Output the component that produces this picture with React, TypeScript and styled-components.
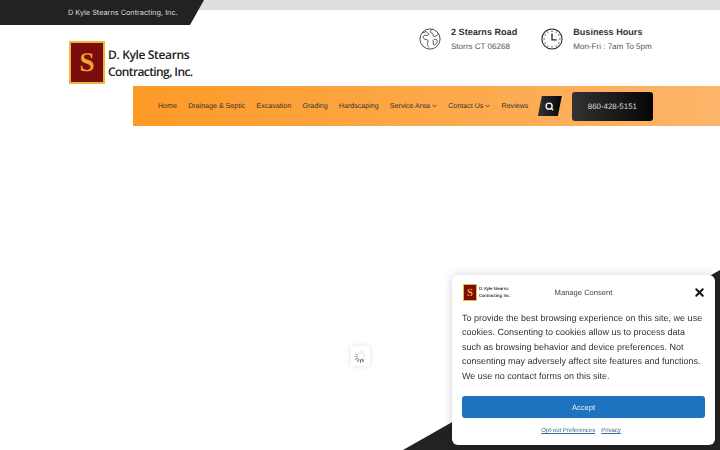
import React from 'react'
import styled, { createGlobalStyle } from 'styled-components'
import { Search, X } from 'lucide-react'

const GlobalStyle = createGlobalStyle`
  html, body {
    margin: 0;
    padding: 0;
    height: 100%;
    overflow: hidden;
    background: #fff;
    font-family: 'Liberation Sans', Arial, sans-serif;
    text-rendering: geometricPrecision;
  }
  * { box-sizing: border-box; }
`

const navItems = [
  { label: 'Home' },
  { label: 'Drainage & Septic' },
  { label: 'Excavation' },
  { label: 'Grading' },
  { label: 'Hardscaping' },
  { label: 'Service Area', sub: true },
  { label: 'Contact Us', sub: true },
  { label: 'Reviews' },
]

const Logo: React.FC<{ small?: boolean }> = ({ small }) => (
  <LogoRow $small={small}>
    <LogoMark $small={small}>S</LogoMark>
    <LogoText $small={small}>
      <LogoName $small={small}>D. Kyle Stearns</LogoName>
      <LogoSub $small={small}>Contracting, Inc.</LogoSub>
    </LogoText>
  </LogoRow>
)

const GlobeIcon = () => (
  <svg width='22' height='22' viewBox='0 0 24 24' fill='none' stroke='#3c3c3c' strokeWidth='1' strokeLinejoin='round'>
    <circle cx='12' cy='12' r='11' />
    <path d='M3.500 5c1.500 0 3-.3 4.300-1.200.6 1.300 2.200 1.500 2.700 2.700.4 1-.6 1.800-1.700 1.600-1.300-.2-2.500-.5-3.500.3-1.200 1-.8 2.700.4 3.500 1.300.8 3 .4 3.900 1.500.8 1.100-.2 2.300-.4 3.500-.2 1.500.6 3.200 1.700 4.200' />
    <path d='M14.500 1.300c-1 1-2.300 1.500-2.200 2.800.1 1.300 2 1.100 2.800 2.100.7 1-.1 2.400 1 3 1.100.5 2.300-.4 3.400-1.200.9-.7 1.700-1.400 2.300-2' />
    <path d='M16.200 12.800c1.300-.6 3-.6 3.500.6.500 1.400-.5 3.100-1.500 4.400-.8 1-2 1.200-2.500 0-.5-1.300.3-2-.2-3-.3-.8 0-1.600.7-2z' />
  </svg>
)

const ClockIcon = () => (
  <svg width='22' height='22' viewBox='0 0 24 24' fill='none' stroke='#222' strokeLinecap='round'>
    <circle cx='12' cy='12' r='11' strokeWidth='1.100' />
    <path d='M12 6.500V13h4.500' strokeWidth='1.400' />
    <path d='M12 3.200v.5M12 20.300v.5M3.200 12h.5M20.300 12h.5M7.500 4.500v.2M16.500 4.500v.2M7.500 19.300v.2M16.500 19.300v.2M4.500 7.500h.2M4.500 16.500h.2M19.300 7.500h.2M19.300 16.500h.2' strokeWidth='1.100' />
  </svg>
)

const Spinner = () => (
  <svg width='13' height='13' viewBox='0 0 24 24' fill='none' strokeWidth='2.200' strokeLinecap='round'>
    {Array.from({ length: 12 }).map((_, i) => (
      <line
        key={i}
        x1='12'
        y1='1.500'
        x2='12'
        y2='6'
        stroke='#555'
        opacity={i >= 5 && i <= 10 ? 0.95 - (i - 5) * 0.12 : 0.12}
        transform={`rotate(${i * 30} 12 12)`}
      />
    ))}
  </svg>
)

const Chevron = () => (
  <svg width='5' height='4' viewBox='0 0 10 8' fill='none' stroke='#333' strokeWidth='1.500'>
    <path d='M1 1.500l4 4.500 4-4.500' />
  </svg>
)

export default function App() {
  return (
    <>
      <GlobalStyle />
      <Page>
        <TopBar>
          <TopBarDark>D Kyle Stearns Contracting, Inc.</TopBarDark>
          <TopBarGrey />
        </TopBar>
        <Header>
          <LogoSlot>
            <Logo />
          </LogoSlot>
          <InfoGroup>
            <InfoItem>
              <GlobeIcon />
              <InfoText>
                <InfoTitle>2 Stearns Road</InfoTitle>
                <InfoLine>Storrs CT 06268</InfoLine>
              </InfoText>
            </InfoItem>
            <InfoItem>
              <ClockIcon />
              <InfoText>
                <InfoTitle>Business Hours</InfoTitle>
                <InfoLine>Mon-Fri : 7am To 5pm</InfoLine>
              </InfoText>
            </InfoItem>
          </InfoGroup>
        </Header>
        <NavBar>
          <NavList>
            {navItems.map(item => (
              <NavItem key={item.label}>
                {item.label}
                {item.sub && <Chevron />}
              </NavItem>
            ))}
          </NavList>
          <SearchButton>
            <Search size={9} strokeWidth={3.500} color='#fff' />
          </SearchButton>
          <PhoneButton>860-428-5151</PhoneButton>
        </NavBar>
      </Page>
      <LoaderBox>
        <Spinner />
      </LoaderBox>
      <CornerShape />
      <ConsentCard>
        <ConsentHeader>
          <Logo small />
          <ConsentTitle>Manage Consent</ConsentTitle>
          <CloseButton>
            <X size={13} strokeWidth={3.500} color='#111' />
          </CloseButton>
        </ConsentHeader>
        <ConsentBody>
          To provide the best browsing experience on this site, we use cookies. Consenting to cookies allow us to process
          data such as browsing behavior and device preferences. Not consenting may adversely affect site features and
          functions. We use no contact forms on this site.
        </ConsentBody>
        <AcceptButton>Accept</AcceptButton>
        <ConsentLinks>
          <ConsentLink>Opt-out Preferences</ConsentLink>
          <ConsentLink>Privacy</ConsentLink>
        </ConsentLinks>
      </ConsentCard>
    </>
  )
}

const Page = styled.div`
  width: 720px;
`

const TopBar = styled.div`
  display: flex;
  height: 25px;
`

const TopBarDark = styled.div`
  width: 204px;
  height: 25px;
  padding-left: 68px;
  display: flex;
  align-items: center;
  background: #222;
  color: #ddd;
  font-family: Inter, 'Liberation Sans', sans-serif;
  font-size: 7.300px;
  white-space: nowrap;
  clip-path: polygon(0 0, 100% 0, 190px 100%, 0 100%);
`

const TopBarGrey = styled.div`
  flex: 1;
  height: 10px;
  margin-left: -14px;
  background: #dedede;
`

const Header = styled.div`
  display: flex;
  height: 61px;
  align-items: flex-start;
`

const LogoSlot = styled.div`
  width: 419px;
  padding: 16px 0 0 69px;
`

const LogoRow = styled.div<{ $small?: boolean }>`
  display: flex;
  align-items: center;
  gap: ${p => (p.$small ? '2px' : '3px')};
  margin-left: ${p => (p.$small ? '1px' : '0')};
`

const LogoMark = styled.div<{ $small?: boolean }>`
  width: ${p => (p.$small ? '14px' : '36px')};
  height: ${p => (p.$small ? '17px' : '43px')};
  display: flex;
  align-items: center;
  justify-content: center;
  background: #7a0c0c;
  border: ${p => (p.$small ? '1px' : '2.500px')} solid #e8b83a;
  color: #eda52e;
  font-family: 'Liberation Serif', serif;
  font-weight: 700;
  font-size: ${p => (p.$small ? '11px' : '27px')};
`

const LogoText = styled.div<{ $small?: boolean }>`
  display: flex;
  flex-direction: column;
  font-family: 'Open Sans', 'Liberation Sans', sans-serif;
  font-weight: 600;
  color: #222;
  line-height: ${p => (p.$small ? '7px' : '17.500px')};
  white-space: nowrap;
  padding-top: ${p => (p.$small ? '0' : '1px')};
`

const LogoName = styled.span<{ $small?: boolean }>`
  font-size: ${p => (p.$small ? '4.300px' : '12px')};
  letter-spacing: ${p => (p.$small ? '-0.1px' : '-0.35px')};
`

const LogoSub = styled.span<{ $small?: boolean }>`
  font-size: ${p => (p.$small ? '4.300px' : '12px')};
  letter-spacing: ${p => (p.$small ? '-0.15px' : '-0.6px')};
`

const InfoGroup = styled.div`
  display: flex;
  gap: 24px;
  padding-top: 3px;
`

const InfoItem = styled.div`
  display: flex;
  gap: 10px;
  align-items: center;
  height: 22px;
`

const InfoText = styled.div`
  display: flex;
  flex-direction: column;
  gap: 3px;
  white-space: nowrap;
`

const InfoTitle = styled.div`
  font-size: 9.100px;
  font-weight: 700;
  color: #333;
  line-height: 12px;
`

const InfoLine = styled.div`
  font-size: 8.050px;
  color: #555;
  line-height: 12px;
`

const NavBar = styled.div`
  display: flex;
  align-items: center;
  margin-left: 133px;
  height: 40px;
  padding-left: 25px;
  background: linear-gradient(90deg, #fd9a26 0%, #fdb56a 100%);
`

const NavList = styled.div`
  display: flex;
  gap: 11.200px;
  align-items: center;
`

const NavItem = styled.div`
  display: flex;
  align-items: center;
  gap: 2px;
  font-size: 7.100px;
  color: #333;
  white-space: nowrap;
`

const SearchButton = styled.div`
  margin-left: 9.500px;
  width: 24px;
  height: 20px;
  display: flex;
  align-items: center;
  justify-content: center;
  background: linear-gradient(90deg, #333, #050505);
  clip-path: polygon(4px 0, 100% 0, 20px 100%, 0 100%);
`

const PhoneButton = styled.div`
  margin-left: 10px;
  width: 81px;
  height: 29px;
  display: flex;
  align-items: center;
  justify-content: center;
  border-radius: 3px;
  background: linear-gradient(90deg, #333, #050505);
  color: #ddd;
  font-size: 7.900px;
`

const LoaderBox = styled.div`
  position: fixed;
  left: 351px;
  top: 346px;
  width: 19px;
  height: 20px;
  display: flex;
  align-items: center;
  justify-content: center;
  background: #fff;
  box-shadow: 0 0 6px rgba(0, 0, 0, 0.12);
`

const CornerShape = styled.div`
  position: fixed;
  inset: 0;
  background: #222;
  clip-path: polygon(403px 450px, 720px 270px, 720px 450px);
`

const ConsentCard = styled.div`
  position: fixed;
  left: 452px;
  top: 275px;
  width: 263px;
  height: 170px;
  padding: 9px 10px 10px;
  border-radius: 6px;
  background: #fff;
  box-shadow: 0 0 10px rgba(0, 0, 0, 0.18);
`

const ConsentHeader = styled.div`
  display: grid;
  grid-template-columns: 1fr auto 1fr;
  align-items: center;
  height: 14px;
  margin-bottom: 13px;
`

const ConsentTitle = styled.div`
  font-size: 7.600px;
  color: #444;
  white-space: nowrap;
`

const CloseButton = styled.div`
  display: flex;
  justify-content: flex-end;
  margin-right: -1px;
`

const ConsentBody = styled.div`
  font-size: 9px;
  line-height: 14.400px;
  color: #333;
`

const AcceptButton = styled.div`
  margin-top: 13px;
  height: 22px;
  display: flex;
  align-items: center;
  justify-content: center;
  border-radius: 3px;
  background: #1e73be;
  color: #e8f0f8;
  font-size: 7.600px;
`

const ConsentLinks = styled.div`
  display: flex;
  justify-content: center;
  gap: 6px;
  margin-top: 10px;
  padding-right: 5px;
`

const ConsentLink = styled.span`
  font-size: 6px;
  color: #3b6a98;
  text-decoration: underline;
`
